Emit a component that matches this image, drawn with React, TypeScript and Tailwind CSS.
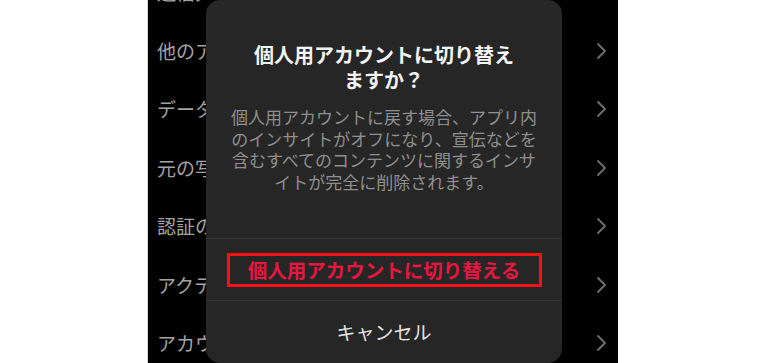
import React from 'react';

const rows = ['通信先の設定', '他のアカウント', 'データ使用量', '元の写真', '認証の設定', 'アクティビティ', 'アカウント管理'];

const Chevron: React.FC = () => (
  <svg width="11" height="18" viewBox="0 0 11 18" fill="none">
    <path d="M2 2l7 7-7 7" stroke="#6f6f6f" strokeWidth="1.8" strokeLinecap="round" strokeLinejoin="round" />
  </svg>
);

const App: React.FC = () => {
  return (
    <div
      className="flex w-[768px] h-[363px] overflow-hidden bg-white"
      style={{ fontFamily: '"Noto Sans CJK JP", "Noto Sans", sans-serif' }}
    >
      <div className="w-[147px] shrink-0 bg-white" />

      {/* phone screen */}
      <div className="relative w-[471px] shrink-0 h-full bg-black border-l border-[#d4d4d4] overflow-hidden">
        <div className="-mt-[37px] flex flex-col">
          {rows.map((label) => (
            <div key={label} className="h-[58.5px] flex items-center justify-between pl-[9px] pr-[11px]">
              {/* only the part left of the dialog is visible */}
              <div className="w-[49px] overflow-hidden">
                <span className="text-[19px] text-[#a3a3a3] whitespace-nowrap">{label}</span>
              </div>
              <Chevron />
            </div>
          ))}
        </div>

        {/* alert dialog */}
        <div className="absolute left-[58px] top-0 w-[356px] h-[363px] bg-[#262626] rounded-[14px] flex flex-col">
          <div className="pt-[42px] px-4 text-center text-[20px] leading-[25px] font-bold text-[#f4f4f4]">
            個人用アカウントに切り替え
            <br />
            ますか？
          </div>
          <div className="mt-[14px] px-4 text-center text-[17px] leading-[21.7px] text-[#8f8f8f] whitespace-nowrap">
            個人用アカウントに戻す場合、アプリ内
            <br />
            のインサイトがオフになり、宣伝などを
            <br />
            含むすべてのコンテンツに関するインサ
            <br />
            イトが完全に削除されます。
          </div>
          <div className="flex-1" />
          <div className="h-[62px] border-t border-[#383838] flex items-center justify-center">
            <div className="w-[315px] h-[34px] border-[3px] border-[#ff1010] flex items-center justify-center">
              <span className="text-[19.5px] leading-[24px] font-bold text-[#e5173f] whitespace-nowrap">個人用アカウントに切り替える</span>
            </div>
          </div>
          <div className="h-[63px] border-t border-[#383838] flex items-center justify-center">
            <span className="text-[19px] text-[#e4e4e4]">キャンセル</span>
          </div>
        </div>
      </div>

      <div className="flex-1 bg-white" />
    </div>
  );
};

export default App;
